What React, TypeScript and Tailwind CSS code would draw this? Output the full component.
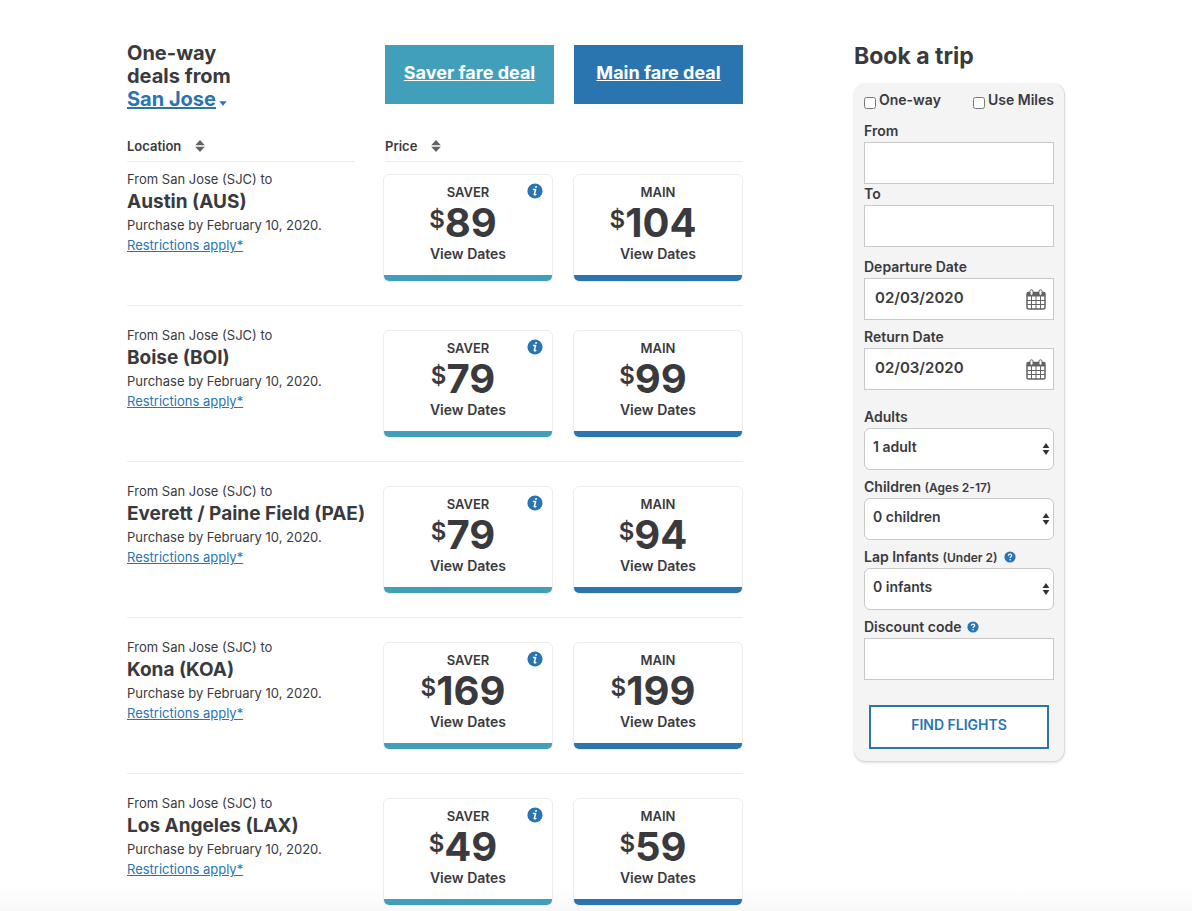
import React, { ReactNode, useState } from "react";
import { clsx } from "clsx";

type Deal = { city: string; saver: number; main: number };

const deals: Deal[] = [
  { city: "Austin (AUS)", saver: 89, main: 104 },
  { city: "Boise (BOI)", saver: 79, main: 99 },
  { city: "Everett / Paine Field (PAE)", saver: 79, main: 94 },
  { city: "Kona (KOA)", saver: 169, main: 199 },
  { city: "Los Angeles (LAX)", saver: 49, main: 59 },
];

const SortIcon = () => (
  <svg width="10" height="12" viewBox="0 0 10 12" fill="#626262" aria-hidden="true">
    <path d="M5 0 9.8 5.2H.2Z" />
    <path d="M5 12 .2 6.8h9.6Z" />
  </svg>
);

const InfoIcon = () => (
  <svg width="16" height="16" viewBox="0 0 16 16" aria-hidden="true">
    <circle cx="8" cy="8" r="7.6" fill="#2a74af" />
    <g fill="none" stroke="#fff" strokeLinecap="round" strokeLinejoin="round">
      <path d="M6.5 6.6h2.1L7.3 11.4q-.2.9 1.5.1" strokeWidth="1.5" />
      <path d="M9 3.9h.1" strokeWidth="1.9" />
    </g>
  </svg>
);

const HelpIcon = () => (
  <svg width="12" height="12" viewBox="0 0 12 12" aria-hidden="true">
    <circle cx="6" cy="6" r="5.6" fill="#2a74af" />
    <path
      d="M4.4 4.7c0-2.1 3.3-2.1 3.3-.1 0 1.2-1.6 1.1-1.6 2.4"
      fill="none"
      stroke="#fff"
      strokeWidth="1.2"
    />
    <circle cx="6.1" cy="8.7" r=".8" fill="#fff" />
  </svg>
);

const CalendarIcon = () => (
  <svg width="20" height="21" viewBox="0 0 20 21" aria-hidden="true">
    <rect x="1" y="3.5" width="18" height="16.5" rx="1.5" fill="#fff" stroke="#626262" strokeWidth="1.5" />
    <path d="M1 3.5h18v4H1z" fill="#626262" />
    <path
      d="M1 11.5h18M1 15.5h18M5.5 7v13M10 7v13M14.5 7v13"
      stroke="#626262"
      strokeWidth="1"
    />
    <rect x="4" y=".8" width="3" height="5.4" rx="1.5" fill="#fff" stroke="#626262" />
    <rect x="13" y=".8" width="3" height="5.4" rx="1.5" fill="#fff" stroke="#626262" />
  </svg>
);

const FareCard = ({
  label,
  price,
  kind,
}: {
  label: string;
  price: number;
  kind: "saver" | "main";
}) => (
  <div className="relative w-[170px] overflow-hidden rounded-md border border-[#ececec] bg-white">
    <a href="#dates" className="flex flex-col items-center pt-[7px] font-semibold">
      <span className="text-[13px] leading-5">{label}</span>
      <span className="flex items-start pr-[10px] text-[40px] leading-[42px] font-bold">
        <span className="text-[24px] leading-9 font-semibold">$</span>
        {price}
      </span>
      <span className="text-[14px] leading-5">View Dates</span>
      <span
        className={clsx(
          "mt-[11px] h-[6px] w-full",
          kind === "saver" ? "bg-[#419fbc]" : "bg-[#2a74af]"
        )}
      />
    </a>
    {kind === "saver" && (
      <button type="button" aria-label="About Saver fares" className="absolute top-2 right-[9px]">
        <InfoIcon />
      </button>
    )}
  </div>
);

const DealRow = ({ deal }: { deal: Deal }) => (
  <li className="flex items-start justify-between border-b border-[#ececec] pt-[19px] pb-[23px] first:pt-[7px] last:border-0 last:pb-0">
    <div className="text-[13px] leading-5 whitespace-nowrap">
      <p>From San Jose (SJC) to</p>
      <h3 className="text-[19px] leading-[26px] font-bold">{deal.city}</h3>
      <p>Purchase by February 10, 2020.</p>
      <a href="#restrictions" className="text-[#2a74af] underline">
        Restrictions apply*
      </a>
    </div>
    <div className="mt-[5px] flex gap-5">
      <FareCard label="SAVER" price={deal.saver} kind="saver" />
      <FareCard label="MAIN" price={deal.main} kind="main" />
    </div>
  </li>
);

const Field = ({
  id,
  label,
  note,
  help,
  className,
  children,
}: {
  id: string;
  label: string;
  note?: string;
  help?: boolean;
  className?: string;
  children: ReactNode;
}) => (
  <div className={className}>
    <div className="flex items-center gap-[6px] pb-px">
      <label htmlFor={id}>
        {label} {note && <span className="text-[12px] leading-4">{note}</span>}
      </label>
      {help && (
        <button type="button" aria-label={`Help with ${label}`}>
          <HelpIcon />
        </button>
      )}
    </div>
    {children}
  </div>
);

const inputClass =
  "block h-[42px] w-full border border-[#c9c9c9] bg-white px-[10px] pb-[3px] text-[15px]";

const DateInput = ({ id }: { id: string }) => {
  const [date, setDate] = useState("02/03/2020");
  return (
    <div className="relative">
      <input id={id} value={date} onChange={(e) => setDate(e.target.value)} className={inputClass} />
      <button type="button" aria-label="Open calendar" className="absolute top-[11px] right-2">
        <CalendarIcon />
      </button>
    </div>
  );
};

const CountSelect = ({ id, options }: { id: string; options: string[] }) => (
  <div className="relative">
    <select
      id={id}
      className="block h-[42px] w-full appearance-none rounded-md border border-[#c9c9c9] bg-white px-2 pb-[5px]"
    >
      {options.map((option) => (
        <option key={option}>{option}</option>
      ))}
    </select>
    <svg
      className="pointer-events-none absolute top-[15px] right-1"
      width="8"
      height="12"
      viewBox="0 0 8 12"
      fill="#333"
      aria-hidden="true"
    >
      <path d="M4 0 7.4 5H.6Z" />
      <path d="M4 12 .6 7h6.8Z" />
    </svg>
  </div>
);

const BookingForm = () => (
  <aside className="w-[211px] shrink-0 pt-[42px]">
    <h2 className="text-[23px] leading-7 font-bold">Book a trip</h2>
    <form
      onSubmit={(e) => e.preventDefault()}
      className="mt-[13px] rounded-xl border-r border-b border-[#dcdcdc] bg-[#f4f4f4] px-[10px] pt-[7px] pb-3 text-[14px] leading-5 font-semibold shadow-sm"
    >
      <div className="flex justify-between">
        <label className="flex items-center gap-[3px]">
          <input type="checkbox" className="mt-[5px] size-3 accent-[#2a74af]" />
          One-way
        </label>
        <label className="flex items-center gap-[3px]">
          <input type="checkbox" className="mt-[5px] size-3 accent-[#2a74af]" />
          Use Miles
        </label>
      </div>
      <Field id="from" label="From" className="mt-[11px]">
        <input id="from" className={inputClass} />
      </Field>
      <Field id="to" label="To">
        <input id="to" className={inputClass} />
      </Field>
      <Field id="depart" label="Departure Date" className="mt-[10px]">
        <DateInput id="depart" />
      </Field>
      <Field id="return" label="Return Date" className="mt-[7px]">
        <DateInput id="return" />
      </Field>
      <Field id="adults" label="Adults" className="mt-[17px]">
        <CountSelect id="adults" options={["1 adult", "2 adults", "3 adults"]} />
      </Field>
      <Field id="children" label="Children" note="(Ages 2-17)" className="mt-[7px]">
        <CountSelect id="children" options={["0 children", "1 child", "2 children"]} />
      </Field>
      <Field id="infants" label="Lap Infants" note="(Under 2)" help className="mt-[7px]">
        <CountSelect id="infants" options={["0 infants", "1 infant", "2 infants"]} />
      </Field>
      <Field id="discount" label="Discount code" help className="mt-[7px]">
        <input id="discount" className={inputClass} />
      </Field>
      <div className="mt-[25px] px-[5px]">
        <button
          type="submit"
          className="h-11 w-full border-2 border-[#2a74af] bg-white pb-[5px] text-[#2a74af]"
        >
          FIND FLIGHTS
        </button>
      </div>
    </form>
  </aside>
);

const App = () => (
  <div className="min-h-screen bg-[linear-gradient(to_top,#f8f8f8,#ffffff_24px)] px-6 font-['Inter','Liberation_Sans',sans-serif] text-[#3a3a3e]">
    <div className="mx-auto flex max-w-[938px] items-start justify-between">
      <main className="w-[616px]">
        {/* Header */}
        <div className="flex items-start justify-between pt-[42px]">
          <h1 className="w-32 text-[20px] leading-[23px] font-bold">
            One-way deals from{" "}
            <span className="flex items-center">
              <a href="#origin" className="text-[#2a74af] underline">
                San Jose
              </a>
              <svg className="mt-[7px] ml-[3px]" width="8" height="5" viewBox="0 0 8 5" fill="#2a74af" aria-hidden="true">
                <path d="M.3.3h7.4L4 4.7Z" />
              </svg>
            </span>
          </h1>
          <div className="mt-[3px] flex gap-5 text-[18px] leading-[56px] font-bold text-white">
            <a href="#saver" className="h-[59px] w-[169px] bg-[#419fbc] text-center underline">
              Saver fare deal
            </a>
            <a href="#main" className="h-[59px] w-[169px] bg-[#2a74af] text-center underline">
              Main fare deal
            </a>
          </div>
        </div>

        {/* Sort controls */}
        <div className="mt-[25px] flex justify-between text-[13px] leading-5 font-semibold">
          <div className="w-[228px] border-b border-[#ececec] pb-[5px]">
            <button type="button" className="flex items-center gap-[14px]">
              Location <SortIcon />
            </button>
          </div>
          <div className="w-[358px] border-b border-[#ececec] pb-[5px]">
            <button type="button" className="flex items-center gap-[14px]">
              Price <SortIcon />
            </button>
          </div>
        </div>

        {/* Deals */}
        <ul>
          {deals.map((deal) => (
            <DealRow key={deal.city} deal={deal} />
          ))}
        </ul>
      </main>
      <BookingForm />
    </div>
  </div>
);

export default App;
